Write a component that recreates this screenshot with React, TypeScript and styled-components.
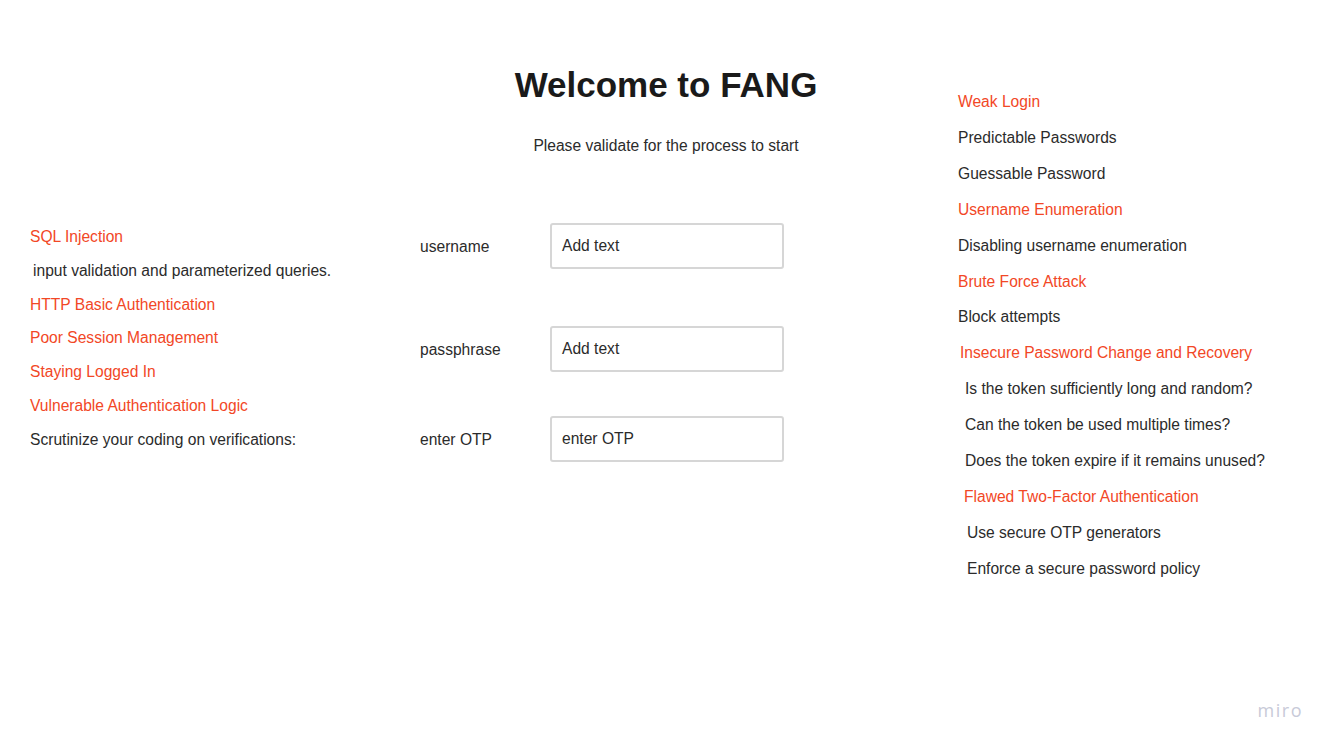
import React from 'react';
import styled, { createGlobalStyle } from 'styled-components';

type Item = {
    text: string;
    accent?: boolean;
    indent?: number;
}

const GlobalStyle = createGlobalStyle`
    html, body {
        margin: 0;
        padding: 0;
        background: #ffffff;
    }

    body {
        font-family: "Liberation Sans", Arial, sans-serif;
        color: #2b2b2b;
    }
`

const Board = styled.div`
    position: relative;
    width: 1333px;
    height: 749px;
    box-sizing: border-box;
    padding-left: 30px;
    display: grid;
    grid-template-columns: 344px 492px minmax(0, 1fr);
    column-gap: 46px;
    align-items: start;
    overflow: hidden;
`

const Column = styled.div<{ $top: number; $step: number }>`
    display: flex;
    flex-direction: column;
    padding-top: ${(props) => props.$top}px;

    & > p {
        height: ${(props) => props.$step}px;
        line-height: ${(props) => props.$step}px;
    }
`

const Note = styled.p<{ $accent?: boolean; $indent?: number }>`
    margin: 0;
    padding-left: ${(props) => props.$indent || 0}px;
    font-size: 15.6px;
    white-space: nowrap;
    color: ${(props) => props.$accent ? '#f24726' : '#2b2b2b'};
`

const Center = styled.div`
    display: flex;
    flex-direction: column;
    align-items: center;
    padding-top: 63px;
`

const Title = styled.h1`
    margin: 0;
    font-size: 35px;
    line-height: 44px;
    font-weight: bold;
    color: #1a1a1a;
`

const Subtitle = styled.p`
    margin: 30px 0 0;
    font-size: 15.6px;
    line-height: 18px;
    color: #2b2b2b;
`

const Form = styled.div`
    align-self: stretch;
    display: flex;
    flex-direction: column;
    padding-top: 68px;
`

const Row = styled.label<{ $gap: number }>`
    display: flex;
    align-items: center;
    margin-top: ${(props) => props.$gap}px;
`

const Label = styled.span`
    width: 130px;
    font-size: 15.6px;
    padding-top: 2px;
    color: #2b2b2b;
`

const Field = styled.div`
    width: 234px;
    height: 46px;
    box-sizing: border-box;
    border: 2px solid #d6d6d6;
    border-radius: 3px;
    padding: 0 10px;
    display: flex;
    align-items: center;
    font-size: 15.6px;
    color: #2b2b2b;

    & > span {
        margin-top: -1px;
    }
`

const Watermark = styled.div`
    position: absolute;
    right: 30px;
    bottom: 27px;
    font-size: 18px;
    letter-spacing: 1.5px;
    color: #c8cad8;
    font-family: "Open Sans", "Liberation Sans", sans-serif;
`

const leftItems: Item[] = [
    { text: 'SQL Injection', accent: true },
    { text: ' input validation and parameterized queries.', indent: 3 },
    { text: 'HTTP Basic Authentication', accent: true },
    { text: 'Poor Session Management', accent: true },
    { text: 'Staying Logged In', accent: true },
    { text: 'Vulnerable Authentication Logic', accent: true },
    { text: 'Scrutinize your coding on verifications:' },
];

const rightItems: Item[] = [
    { text: 'Weak Login', accent: true },
    { text: 'Predictable Passwords' },
    { text: 'Guessable Password' },
    { text: 'Username Enumeration', accent: true },
    { text: 'Disabling username enumeration' },
    { text: 'Brute Force Attack', accent: true },
    { text: 'Block attempts' },
    { text: 'Insecure Password Change and Recovery', accent: true, indent: 2 },
    { text: 'Is the token sufficiently long and random?', indent: 7 },
    { text: 'Can the token be used multiple times?', indent: 7 },
    { text: 'Does the token expire if it remains unused?', indent: 7 },
    { text: 'Flawed Two-Factor Authentication', accent: true, indent: 6 },
    { text: 'Use secure OTP generators', indent: 9 },
    { text: 'Enforce a secure password policy', indent: 9 },
];

const fields = [
    { label: 'username', value: 'Add text', gap: 0 },
    { label: 'passphrase', value: 'Add text', gap: 57 },
    { label: 'enter OTP', value: 'enter OTP', gap: 44 },
];

const App: React.FC = () => {
    return (
        <>
            <GlobalStyle />
            <Board>
                <Column $top={220} $step={33.8}>
                    {leftItems.map((item) => (
                        <Note key={item.text} $accent={item.accent} $indent={item.indent}>{item.text}</Note>
                    ))}
                </Column>

                <Center>
                    <Title>Welcome to FANG</Title>
                    <Subtitle>Please validate for the process to start</Subtitle>
                    <Form>
                        {fields.map((field) => (
                            <Row key={field.label} $gap={field.gap}>
                                <Label>{field.label}</Label>
                                <Field><span>{field.value}</span></Field>
                            </Row>
                        ))}
                    </Form>
                </Center>

                <Column $top={84} $step={35.92}>
                    {rightItems.map((item) => (
                        <Note key={item.text} $accent={item.accent} $indent={item.indent}>{item.text}</Note>
                    ))}
                </Column>
                <Watermark>miro</Watermark>
            </Board>
        </>
    )
}

export default App;
